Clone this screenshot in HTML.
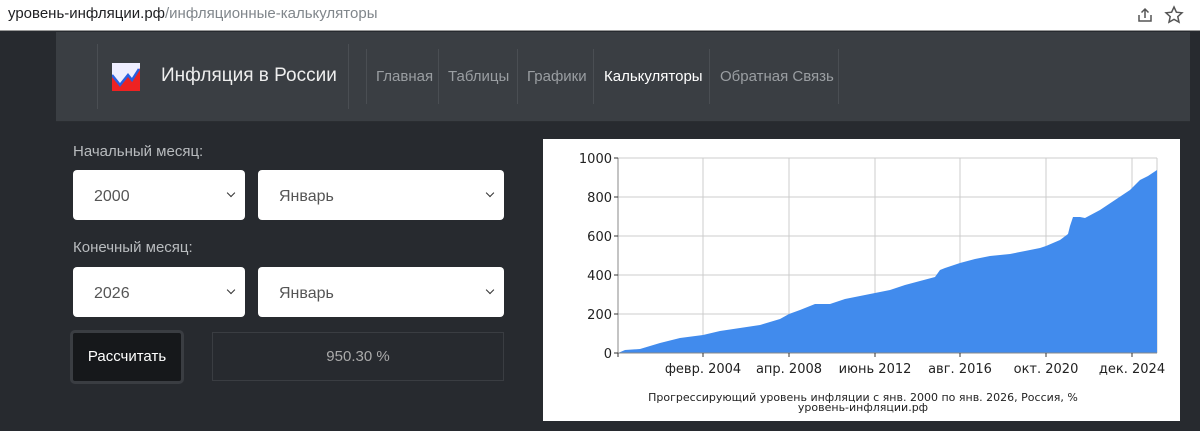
<!DOCTYPE html>
<html><head><meta charset="utf-8"><style>
*{box-sizing:border-box;margin:0;padding:0}
body{width:1200px;height:431px;overflow:hidden;background:#272a2f;font-family:"Liberation Sans","DejaVu Sans",sans-serif;position:relative}
.bar{position:absolute;left:0;top:0;width:1200px;height:31px;background:#fff;border-bottom:1px solid #9a9a9a}
.url{position:absolute;left:8px;top:5px;font-size:15px;color:#202124}
.url span{color:#80868b}
.nav{position:absolute;left:56px;top:32px;width:1134px;height:90px;background:#3a3e43;border-bottom:1px solid #2a2d31}
.sep{position:absolute;width:1px;background:#4a4e53}
.brand{position:absolute;left:161px;top:65px;font-size:19px;color:#eee}
.nl{position:absolute;top:68px;font-size:15px;color:#9a9ea2}
.lbl{position:absolute;left:73px;font-size:15px;color:#b8bbbe}
.sel{position:absolute;background:#fff;border-radius:4px;height:50px;font-size:16px;color:#555;padding:18px 0 0 21px}
.sel:after{content:"";position:absolute;right:11px;top:20px;width:5px;height:5px;border-right:1.5px solid #333;border-bottom:1.5px solid #333;transform:rotate(45deg)}
.btn{position:absolute;left:70px;top:330px;width:114px;height:54px;background:#16181b;border:3px solid #3a3d42;border-radius:5px;color:#fff;font-size:15px;text-align:center;line-height:48px}
.res{position:absolute;left:212px;top:332px;width:292px;height:49px;border:1px solid #3a3d42;color:#aaa;font-size:15px;text-align:center;line-height:47px}
</style></head><body>
<div class="bar"><div class="url">уровень-инфляции.рф<span>/инфляционные-калькуляторы</span></div>
<svg style="position:absolute;left:1136px;top:6px" width="18" height="18" viewBox="0 0 18 18" fill="none" stroke="#555" stroke-width="1.5"><path d="M3 9v6h12V9M9 12V3M5.5 6.5L9 3l3.5 3.5"/></svg>
<svg style="position:absolute;left:1164px;top:5px" width="20" height="20" viewBox="0 0 20 20" fill="none" stroke="#555" stroke-width="1.5"><path d="M10 2l2.4 5.2 5.6.6-4.2 3.8 1.2 5.6L10 14.4 5 17.2l1.2-5.6L2 7.8l5.6-.6z"/></svg></div>
<div class="nav"></div>
<div class="sep" style="left:97px;top:44px;height:65px"></div>
<div class="sep" style="left:348px;top:44px;height:65px"></div>
<div class="sep" style="left:366px;top:49px;height:55px"></div>
<div class="sep" style="left:438px;top:49px;height:55px"></div>
<div class="sep" style="left:517px;top:49px;height:55px"></div>
<div class="sep" style="left:593px;top:49px;height:55px"></div>
<div class="sep" style="left:709px;top:49px;height:55px"></div>
<div class="sep" style="left:838px;top:49px;height:55px"></div>
<svg style="position:absolute;left:112px;top:63px" width="28" height="28" viewBox="0 0 28 28"><rect width="28" height="28" fill="#eef"/><path d="M0 28V12l8 10 8-10 4 5 8-12v23z" fill="#e22"/><path d="M0 12l8 10 8-10 4 5 7-11" stroke="#2a5fe0" stroke-width="2.5" fill="none"/></svg>
<div class="brand">Инфляция в России</div>
<div class="nl" style="left:376px">Главная</div>
<div class="nl" style="left:448px">Таблицы</div>
<div class="nl" style="left:527px">Графики</div>
<div class="nl" style="left:604px;color:#fff">Калькуляторы</div>
<div class="nl" style="left:720px">Обратная Связь</div>
<div class="lbl" style="top:143px">Начальный месяц:</div>
<div class="sel" style="left:73px;top:170px;width:172px">2000</div>
<div class="sel" style="left:258px;top:170px;width:246px">Январь</div>
<div class="lbl" style="top:239px">Конечный месяц:</div>
<div class="sel" style="left:73px;top:267px;width:172px">2026</div>
<div class="sel" style="left:258px;top:267px;width:246px">Январь</div>
<div class="btn">Рассчитать</div>
<div class="res">950.30 %</div>
<svg style="position:absolute;left:543px;top:139px" width="637" height="282" viewBox="543 139 637 282" font-family="DejaVu Sans,sans-serif">
<rect x="543" y="139" width="637" height="282" fill="#fff"/>
<g stroke="#ccc" stroke-width="1">
<path d="M618 158H1157M618 197H1157M618 236H1157M618 275H1157M618 314H1157"/>
<path d="M703 158V353M789 158V353M875 158V353M960 158V353M1046 158V353M1132 158V353M1157 158V353"/></g>
<polygon fill="#418bed" points="618,353 625,350 640,349 660,343 680,338 703,335 720,331 740,328 760,325 780,319 789,314 800,310 815,304 830,304 845,299 860,296 875,293 890,290 905,285 920,281 935,277 940,270 945,268 960,263 975,259 990,256 1010,254 1025,251 1040,248 1046,246 1060,240 1068,234 1070,226 1073,217 1080,217 1085,218 1100,210 1115,200 1130,190 1140,180 1148,176 1157,170 1157,353"/>
<path d="M618 158V353H1157" stroke="#888" fill="none"/>
<g stroke="#333"><path d="M614 158h4M614 197h4M614 236h4M614 275h4M614 314h4M614 353h4M618 353v4M703 353v4M789 353v4M875 353v4M960 353v4M1046 353v4M1132 353v4"/></g>
<g font-size="13" fill="#222" text-anchor="end"><text x="612" y="163">1000</text><text x="612" y="202">800</text><text x="612" y="241">600</text><text x="612" y="280">400</text><text x="612" y="319">200</text><text x="612" y="358">0</text></g>
<g font-size="13" fill="#222" text-anchor="middle"><text x="703" y="373">февр. 2004</text><text x="789" y="373">апр. 2008</text><text x="875" y="373">июнь 2012</text><text x="960" y="373">авг. 2016</text><text x="1046" y="373">окт. 2020</text><text x="1132" y="373">дек. 2024</text></g>
<g font-size="11" fill="#222" text-anchor="middle"><text x="863" y="401">Прогрессирующий уровень инфляции с янв. 2000 по янв. 2026, Россия, %</text><text x="863" y="411">уровень-инфляции.рф</text></g>
</svg>
</body></html>
